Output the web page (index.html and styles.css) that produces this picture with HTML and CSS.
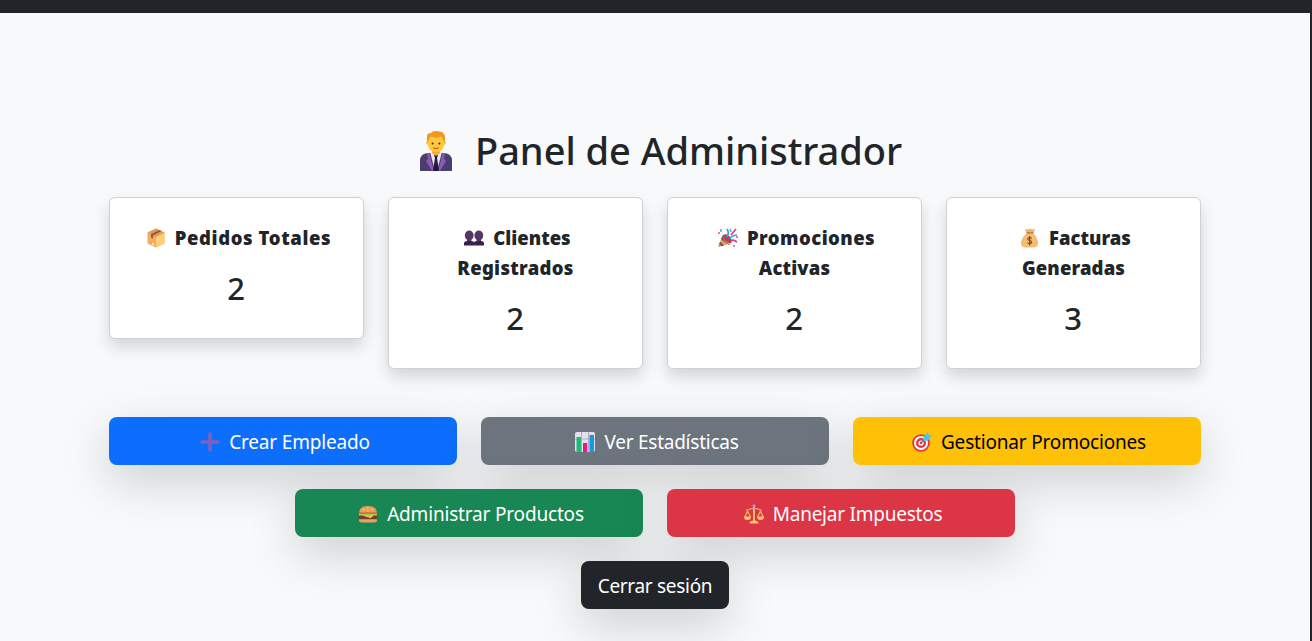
FILE: index.html
```html
<!DOCTYPE html>
<html lang="es">
<head>
<meta charset="utf-8">
<title>Panel de Administrador</title>
<link rel="stylesheet" href="styles.css">
</head>
<body>
<header class="topbar"></header>
<main class="page">
  <div class="container">
    <h1 class="heading">
      <svg class="icon-admin" viewBox="0 0 32 40"><path fill="#4a3d70" d="M0 40V30q0-8 9-8h14q9 0 9 8v10z"/><path fill="#8b5cb5" d="M9 22l5 18H12L6 30l2-2-1-6zM23 22l-5 18h2l6-10-2-2 1-6z"/><path fill="#e9e4f0" d="M10 21h12l-5 19h-2z"/><path fill="#24183f" d="M14 24h4l-1 3 2 13h-6l2-13z"/><path fill="#f5ac22" d="M12 17h8v5l-4 3-4-3z"/><path fill="#ffc83d" d="M8 7h16v6c0 5-3 8-8 8s-8-3-8-8z"/><circle fill="#ffc83d" cx="7.800" cy="12" r="1.800"/><circle fill="#ffc83d" cx="24.200" cy="12" r="1.800"/><path fill="#f09a25" d="M7 11V5q0-3 4-3 1-2 5-2 9 0 9 6v5h-1q0-3-3-5-5 2-10 0-3 2-3 5z"/><circle fill="#3b2a32" cx="12.600" cy="12.500" r="1"/><circle fill="#3b2a32" cx="19.400" cy="12.500" r="1"/><path fill="none" stroke="#c9432f" stroke-width="1" stroke-linecap="round" d="M13.500 17q2.500 1.500 5 0"/></svg>
      <span class="heading-text">Panel de Administrador</span>
    </h1>
    <section class="stats">
      <article class="card">
        <h5 class="card-title"><span class="line with-icon"><svg class="icon" viewBox="0 0 20 20"><path fill="#f3ad61" d="M10 .5l8.500 4v11L10 19.500l-8.500-4v-11z"/><path fill="#ffce7c" d="M10 9l8.500-4.500v11L10 19.500z"/><path fill="#e79b50" d="M1.500 4.500L10 .5l8.500 4L10 9z"/><path fill="#8d5745" d="M5 6.300L13.500 2l2 1L7 7.500v3.300L5 9.600z"/><path fill="#fff0d0" d="M6 14.500l2 1v2l-2-1z"/></svg><span class="w-pedidos">Pedidos Totales</span></span></h5>
        <p class="count">2</p>
      </article>
      <article class="card">
        <h5 class="card-title"><span class="line with-icon"><svg class="icon" viewBox="0 0 20 20"><g fill="#533566"><ellipse cx="5.200" cy="7.500" rx="4.400" ry="5"/><ellipse cx="14.800" cy="7.500" rx="4.400" ry="5"/><path d="M3 9h4.400v4.500H3zM12.600 9H17v4.500h-4.400z"/></g><path fill="#39214e" d="M0 17.500v-2q0-2.500 3-2.500h4.500q2.500 0 2.500 1.500 0-1.500 2.500-1.500H17q3 0 3 2.500v2z"/></svg><span class="w-clientes">Clientes</span></span><span class="line w-registrados">Registrados</span></h5>
        <p class="count">2</p>
      </article>
      <article class="card">
        <h5 class="card-title"><span class="line with-icon"><svg class="icon" viewBox="0 0 20 20"><path fill="#dca04c" d="M5 7l8 8L1 19q-1 0-.8-1z"/><path fill="#6d5163" d="M5 7q-1 3 3 7t6 2l-3 1-8-6zM2 14l4 3.500-2 .7L1.200 16z"/><path fill="#c33a50" d="M5 7q4-2 7 2t1 6q-3 1-6-3T5 7z"/><g fill="none" stroke-width="1.700"><path stroke="#1ca8df" d="M8 9q4-3 1-8M12 11q0-3 7-4"/><path stroke="#e23986" d="M13 7l5-6M13 13q2-2 6 1"/><path stroke="#58b5e7" d="M3 1v3M12 1l1 3"/></g><g fill="#ec4885"><circle cx="1" cy="5" r="1"/><circle cx="16" cy="18" r="1"/><circle cx="19" cy="9" r="1"/></g></svg><span class="w-promos">Promociones</span></span><span class="line w-activas">Activas</span></h5>
        <p class="count">2</p>
      </article>
      <article class="card">
        <h5 class="card-title"><span class="line with-icon"><svg class="icon" viewBox="0 0 20 20"><path fill="#efb36a" d="M5 1l3 .6L10 .5l2 1.100L15 1l-1.500 4h-7z"/><path fill="#f4bd70" d="M7 5h6q5 5 5 10 0 4.500-5 4.500H6q-5 0-5-4.500 0-5 6-10z"/><path fill="#aa7150" d="M6.500 4.300h7v1.200h-7z"/><path fill="none" stroke="#734737" stroke-width="1.100" d="M11.700 10.500q-1-1-2.200-1-1.800.2-1.800 1.500 0 1.200 2 1.500t2 1.700q0 1.300-2 1.400-1.300 0-2.300-1M9.600 8v9.500"/></svg><span class="w-facturas">Facturas</span></span><span class="line w-generadas">Generadas</span></h5>
        <p class="count">3</p>
      </article>
    </section>
    <nav class="actions">
      <a class="btn blue"><svg class="icon" viewBox="0 0 20 20"><path fill="none" stroke="#8160bd" stroke-width="3.400" stroke-linecap="round" d="M10 2v16M2 10h16"/></svg><span class="w-crear">Crear Empleado</span></a>
      <a class="btn gray"><svg class="icon" viewBox="0 0 20 20"><rect fill="#e5dfec" width="20" height="20" rx="2"/><path stroke="#aaa0b9" stroke-width=".8" d="M6.500 0v20M13.500 0v20M0 7h20"/><path fill="#1dbb76" d="M1.500 5H6v15H1.500z"/><path fill="#e91b83" d="M8 11h4.200v9H8z"/><path fill="#159bdd" d="M14.500 3H19v17h-4.500z"/></svg><span class="w-ver">Ver Estadísticas</span></a>
      <a class="btn yellow"><svg class="icon" viewBox="0 0 20 20"><circle fill="#e5373c" cx="9" cy="11" r="8.800"/><circle fill="none" stroke="#fff" stroke-width="2" cx="9" cy="11" r="6"/><circle fill="#fff" cx="9" cy="11" r="2.600"/><circle fill="#e5373c" cx="9" cy="11" r="1.300"/><path stroke="#378fb0" stroke-width="1.300" d="M9 11l6-6"/><path fill="#4cc4ed" d="M11.500 5L16 0l.8 3 3.200.8-4.500 4.700-4 .5z"/></svg><span class="w-gestionar">Gestionar Promociones</span></a>
      <a class="btn green"><svg class="icon" viewBox="0 0 20 20"><path fill="#e3a158" d="M1 9.500q0-7.500 9-7.500t9 7.500z"/><path fill="#ffe0a0" d="M5 5h1.500v1H5zM9 3.500h1.500v1H9zM13.500 5H15v1h-1.500zM9 6.500h1.500v1H9z"/><path fill="#dc4940" d="M1 8.500h18v2H1z"/><path fill="#a6cf49" d="M.5 9.800h19l-1 1.700-2.500-.3-2 1-3-1-3 1-3-1-4 .3z"/><path fill="#704035" d="M.5 12h19v3.500H.5z"/><path fill="#ffcb49" d="M4 11.500h12l-3.500 2.500z"/><path fill="#e5a45b" d="M1 15.300h18v1q0 2.200-3 2.200H4q-3 0-3-2.200z"/></svg><span class="w-admin">Administrar Productos</span></a>
      <a class="btn red"><svg class="icon" viewBox="0 0 20 20"><g fill="none" stroke="#f5b65c" stroke-width="1.200"><path d="M3.500 7L.8 13M3.500 7l3 6M16.500 7l-3 6M16.500 7l2.700 6M2 6q4 0 5-1.500h6Q14 6 18 6"/></g><path fill="#ffc76b" d="M9.100 3h1.800v13.500H9.100zM0 12.500h7q0 3.500-3.500 3.500T0 12.500zM13 12.500h7q0 3.500-3.500 3.500T13 12.500zM5.500 19.500q0-3 4.500-3t4.500 3z"/><circle fill="#b99ac4" cx="10" cy="1.800" r="1.500"/><circle fill="#c6a0b6" cx="10" cy="5" r="1.500"/></svg><span class="w-manejar">Manejar Impuestos</span></a>
    </nav>
    <footer class="session"><a class="btn dark"><span class="w-cerrar">Cerrar sesión</span></a></footer>
  </div>
</main>
</body>
</html>
```
FILE: styles.css
```css
* { box-sizing: border-box; }
body { margin: 0; height: 641px; overflow: hidden; background: #212529; color: #212529; font-family: "Noto Sans", "Open Sans", sans-serif; }
.topbar { height: 13px; background: #212529; }
.page { width: 1310px; height: 628px; overflow: hidden; background: #f8f9fa; }
.container { width: 1092px; margin: 0 auto; padding-top: 114px; }
.heading { display: flex; justify-content: center; align-items: center; gap: 23px; height: 48px; margin: 0 0 22px; padding-left: 12px; font-size: 38px; font-weight: 500; line-height: 46px; letter-spacing: -.03px; white-space: nowrap; }
.heading-text { height: 48px; }
.icon-admin { width: 32px; height: 40px; flex: none; }
.stats { display: grid; grid-template-columns: repeat(4, 255px); gap: 24px; align-items: start; }
.card { padding: 25px 16px 24px; border: 1px solid #cfd1d3; border-radius: 6px; background: #fff; box-shadow: 0 8px 16px rgba(0,0,0,.15); text-align: center; }
.card-title { margin: 0 0 8px; font-size: 18.500px; font-weight: 900; line-height: 30px; }
.line { display: flex; justify-content: center; align-items: center; height: 30px; gap: 9px; white-space: nowrap; }
.with-icon { padding-left: 4px; }
.w-pedidos { letter-spacing: .6px; }
.w-registrados { letter-spacing: .3px; }
.w-promos { letter-spacing: .45px; }
.w-activas, .w-generadas { letter-spacing: .15px; }
.icon { width: 20px; height: 20px; flex: none; }
.count { margin: 0; height: 53px; padding: 3px 1px 0 0; font-size: 31px; font-weight: 500; line-height: 48px; }
.actions { display: flex; flex-wrap: wrap; justify-content: center; gap: 24px; margin-top: 48px; }
.btn { display: flex; justify-content: center; align-items: center; gap: 9px; width: 348px; height: 48px; padding: 2px 0 0 4px; border-radius: 8px; box-shadow: 0 16px 48px rgba(0,0,0,.175); color: #fff; font-size: 19px; line-height: 30px; letter-spacing: -.18px; white-space: nowrap; }
.blue { background: #0d6efd; }
.gray { background: #6c757d; }
.yellow { background: #ffc107; color: #000; }
.green { background: #198754; }
.red { background: #dc3545; }
.w-ver, .w-manejar { letter-spacing: -.24px; }
.session { display: flex; justify-content: center; margin-top: 24px; }
.dark { width: 148px; padding-left: 0; background: #212529; letter-spacing: -.3px; }
```
